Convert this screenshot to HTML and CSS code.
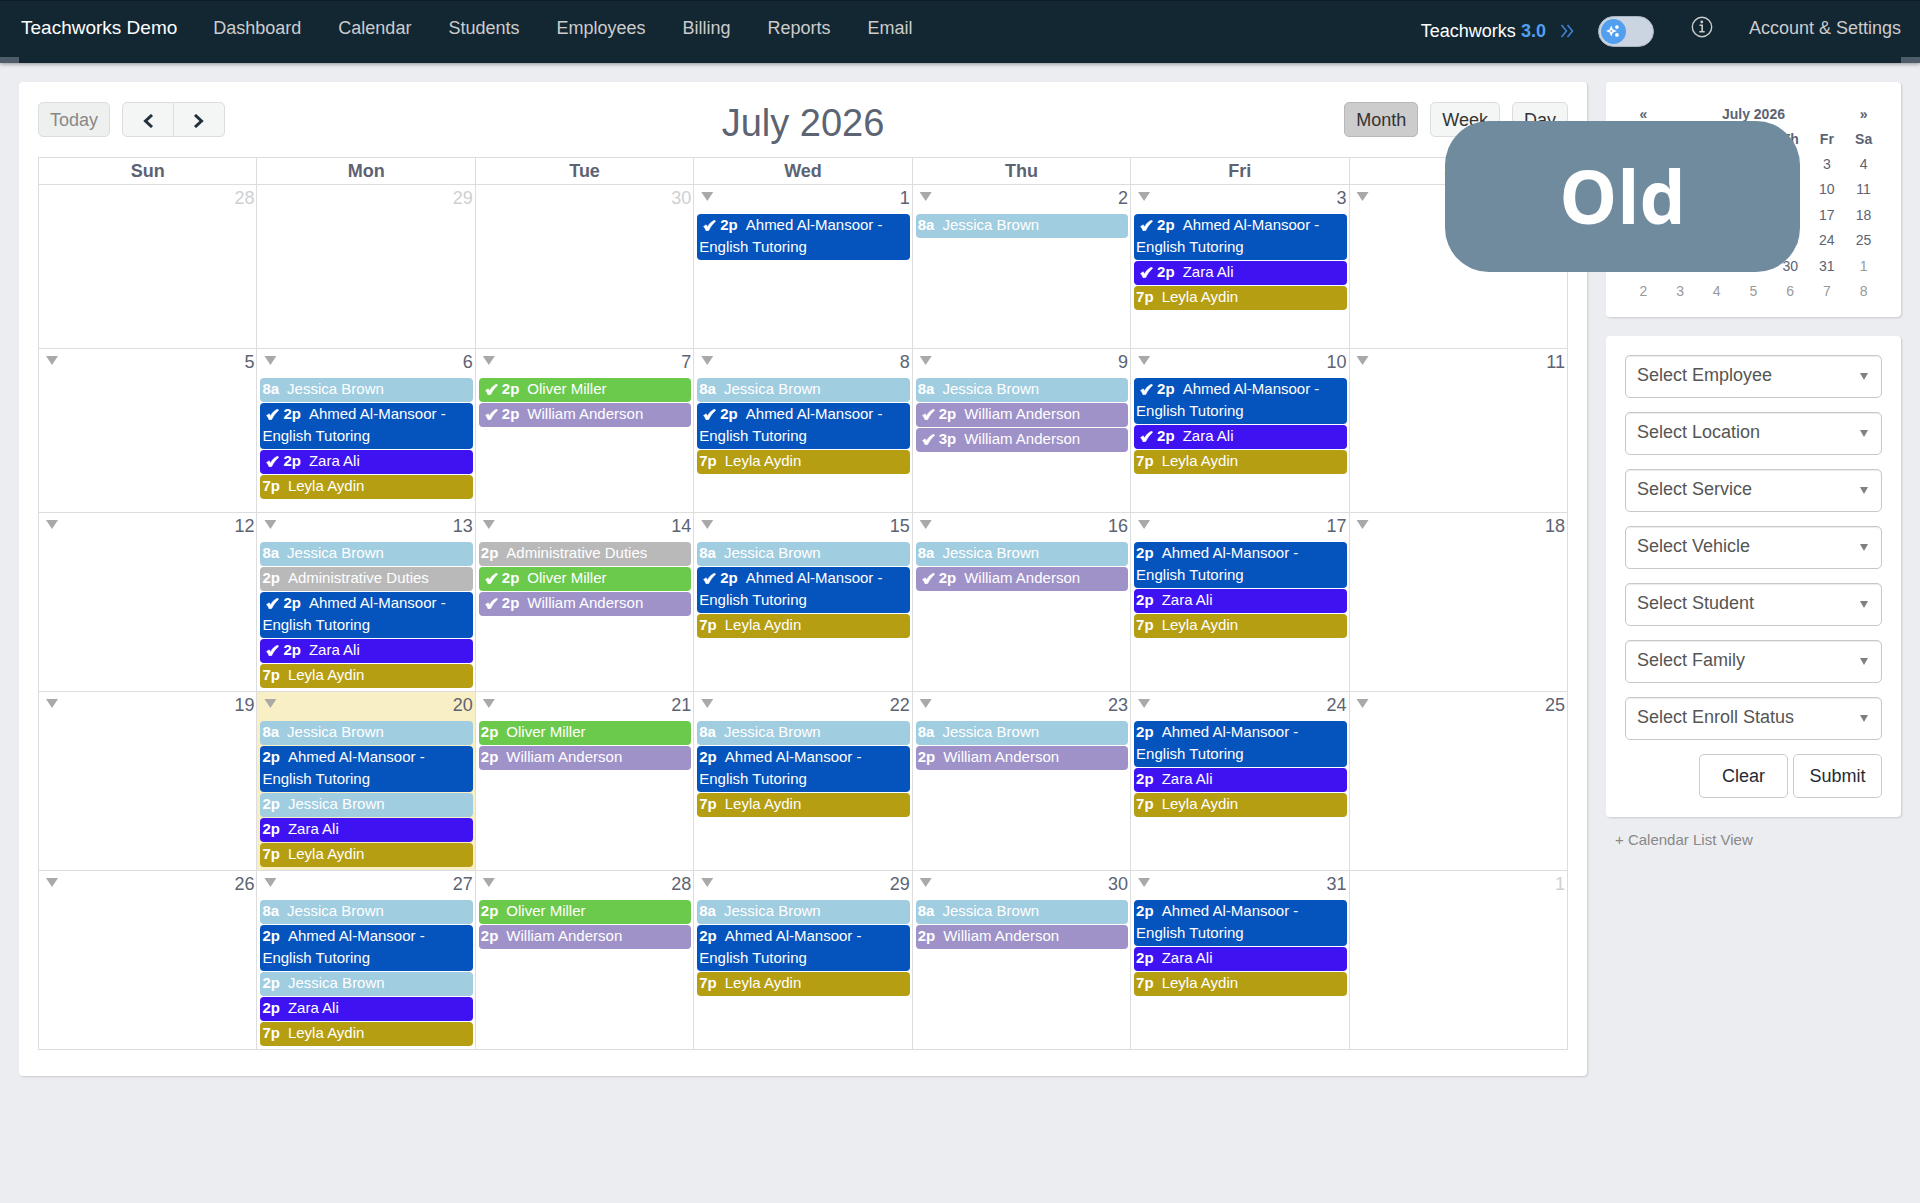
FILE: index.html
```html
<!DOCTYPE html>
<html lang="en">
<head>
  <meta charset="UTF-8">
  <meta name="viewport" content="width=device-width, initial-scale=1.0">
  <title>Calendar - Teachworks Demo</title>
  <link rel="stylesheet" href="styles.css">
</head>
<body>
<svg class="defs" aria-hidden="true">
  <symbol id="check" viewBox="0 0 14 12"><path d="M0.5 7 L3.4 5.2 C4 6 4.400 6.800 4.700 7.500 C6.600 4.200 9.200 1.500 12.800 0 L13.600 1.600 C10.400 4.200 8.200 7.400 6.200 11.400 L3.400 12 C2.600 10 1.700 8.400 0.500 7 Z" fill="currentColor" stroke="currentColor" stroke-width="0.500"/></symbol>
</svg>

<header class="topbar">
  <a class="brand" href="#">Teachworks Demo</a>
  <nav class="nav">
    <a href="#">Dashboard</a>
    <a href="#">Calendar</a>
    <a href="#">Students</a>
    <a href="#">Employees</a>
    <a href="#">Billing</a>
    <a href="#">Reports</a>
    <a href="#">Email</a>
  </nav>
  <div class="upgrade">
    <span class="upgrade-label">Teachworks <b>3.0</b></span>
    <svg class="chevrons" viewBox="0 0 14 14" fill="none" stroke="currentColor" stroke-width="1.5"><path d="M1.5 1l5 6-5 6M7.5 1l5 6-5 6"/></svg>
    <label class="switch">
      <input type="checkbox" aria-label="Switch to Teachworks 3.0">
      <span class="knob">
        <svg viewBox="0 0 16 16" fill="none" stroke="#fff" stroke-width="1.8"><path d="M6 4l1.200 2.800L10 8 7.200 9.200 6 12 4.800 9.200 2 8l2.800-1.200z"/><circle cx="12.500" cy="3.500" r="1.200" fill="#fff"/><circle cx="12.500" cy="12.500" r="1.200" fill="#fff"/></svg>
      </span>
    </label>
  </div>
  <a class="info" href="#" aria-label="Info">
    <svg viewBox="0 0 22 22" fill="none" stroke="currentColor"><circle cx="11" cy="11" r="9.700" stroke-width="1.400"/><circle cx="10.800" cy="6" r="1.400" fill="currentColor" stroke="none"/><path d="M8.500 9.300h2.700v6.500M8.300 15.800h5.400" stroke-width="1.600"/></svg>
  </a>
  <a class="account" href="#">Account &amp; Settings</a>
</header>

<main class="page">
  <section class="card calendar">
    <div class="toolbar">
      <div class="tools">
        <button class="btn" disabled>Today</button>
        <div class="group">
          <button class="btn arrow" aria-label="Previous"><svg viewBox="0 0 12 14" fill="none" stroke="currentColor" stroke-width="3"><path d="M10 1L3.500 7l6.500 6"/></svg></button>
          <button class="btn arrow" aria-label="Next"><svg viewBox="0 0 12 14" fill="none" stroke="currentColor" stroke-width="3"><path d="M2 1l6.500 6L2 13"/></svg></button>
        </div>
      </div>
      <h1>July 2026</h1>
      <div class="tools tools-right">
        <button class="btn active">Month</button>
        <button class="btn">Week</button>
        <button class="btn">Day</button>
      </div>
    </div>
    <table class="month">
      <thead>
        <tr><th>Sun</th><th>Mon</th><th>Tue</th><th>Wed</th><th>Thu</th><th>Fri</th><th>Sat</th></tr>
      </thead>
      <tbody id="days"></tbody>
    </table>
  </section>

  <aside class="side">
    <section class="card mini">
      <table>
        <thead>
          <tr><th><a href="#" aria-label="Previous month">«</a></th><th colspan="5">July 2026</th><th><a href="#" aria-label="Next month">»</a></th></tr>
          <tr><th>Su</th><th>Mo</th><th>Tu</th><th>We</th><th>Th</th><th>Fr</th><th>Sa</th></tr>
        </thead>
        <tbody id="miniDays"></tbody>
      </table>
    </section>

    <form class="card filters" onsubmit="return false">
      <div class="field"><select aria-label="Employee"><option>Select Employee</option></select></div>
      <div class="field"><select aria-label="Location"><option>Select Location</option></select></div>
      <div class="field"><select aria-label="Service"><option>Select Service</option></select></div>
      <div class="field"><select aria-label="Vehicle"><option>Select Vehicle</option></select></div>
      <div class="field"><select aria-label="Student"><option>Select Student</option></select></div>
      <div class="field"><select aria-label="Family"><option>Select Family</option></select></div>
      <div class="field"><select aria-label="Enroll Status"><option>Select Enroll Status</option></select></div>
      <div class="actions">
        <button type="reset">Clear</button>
        <button type="submit">Submit</button>
      </div>
    </form>
    <a class="list-link" href="#">+ Calendar List View</a>
  </aside>
</main>

<div class="version">Old</div>

<script src="script.js"></script>
</body>
</html>
```

FILE: styles.css
```css
* {
  box-sizing: border-box;
}
body {
  margin: 0;
  min-height: 100vh;
  background: #ecedf1;
  font-family: "Liberation Sans", Arial, sans-serif;
  font-size: 18px;
  color: #5c6373;
}
a {
  color: inherit;
  text-decoration: none;
}
button, select {
  font: inherit;
  cursor: pointer;
}
.defs {
  position: absolute;
  width: 0;
  height: 0;
}

/* top bar */
.topbar {
  position: relative;
  display: flex;
  align-items: flex-start;
  height: 63px;
  padding: 15px 19px 0 21px;
  background: #132733;
  border-top: 1px solid #0e1d27;
  box-shadow: 0 1px 4px rgba(0, 0, 0, 0.4);
  color: #ccc;
  line-height: 24px;
  white-space: nowrap;
}
.topbar::before,
.topbar::after {
  content: "";
  position: absolute;
  bottom: 0;
  width: 19px;
  height: 6px;
  background: #4f5d6b;
}
.topbar::before {
  left: 0;
}
.topbar::after {
  right: 0;
}
.brand {
  margin-right: 36px;
  font-size: 19px;
  color: #fff;
}
.nav {
  display: flex;
  gap: 37px;
}
.upgrade {
  display: flex;
  align-items: center;
  height: 30px;
  margin-left: auto;
  color: #fff;
}
.upgrade b {
  color: #529ff0;
}
.chevrons {
  width: 14px;
  height: 14px;
  margin: 0 24px 0 14px;
  color: #3f86d8;
}
.switch {
  display: flex;
  width: 56px;
  height: 31px;
  padding: 2px;
  border: 1px solid #aab4c0;
  border-radius: 16px;
  background: #cbd5e1;
}
.switch input {
  position: absolute;
  opacity: 0;
}
.knob {
  display: flex;
  align-items: center;
  justify-content: center;
  width: 25px;
  height: 25px;
  border-radius: 50%;
  background: #529ff0;
}
.knob svg {
  width: 14px;
  height: 14px;
}
.info {
  margin: 0 36px 0 37px;
}
.info svg {
  display: block;
  width: 22px;
  height: 22px;
}

/* layout */
.page {
  display: grid;
  grid-template-columns: minmax(0, 1fr) 295px;
  align-items: start;
  gap: 19px;
  padding: 19px;
}
.card {
  background: #fff;
  border-radius: 4px;
  box-shadow: 1px 1px 2px rgba(0, 0, 0, 0.15);
}

/* calendar */
.calendar {
  padding: 20px 19px 26px;
}
.toolbar {
  display: grid;
  grid-template-columns: 1fr auto 1fr;
  height: 55px;
}
.toolbar h1 {
  margin: 0;
  font-size: 38px;
  font-weight: 400;
  line-height: 42px;
}
.tools {
  display: flex;
  gap: 12px;
}
.tools-right {
  justify-content: flex-end;
}
.group {
  display: flex;
}
.btn {
  height: 35px;
  padding: 1px 11px 0;
  border: 1px solid #dcdede;
  border-radius: 5px;
  background: #f4f6f5;
  color: #333;
}
.btn:disabled {
  background: #eef0ef;
  color: #888;
}
.btn.active {
  border-color: #b8b8b8;
  background: #ccc;
}
.arrow {
  display: flex;
  align-items: center;
  justify-content: center;
  width: 52px;
  padding: 3px 0 0;
  color: #22303c;
}
.arrow svg {
  width: 12px;
  height: 14px;
}
.arrow:first-child {
  border-radius: 5px 0 0 5px;
}
.arrow:last-child {
  margin-left: -1px;
  border-radius: 0 5px 5px 0;
}
.month {
  width: 100%;
  border-collapse: collapse;
  table-layout: fixed;
}
.month th,
.month td {
  padding: 0;
  border: 1px solid #ddd;
}
.month th {
  height: 27px;
  line-height: 22px;
}
.month td {
  height: 164px;
  padding: 0 2px 2px 3px;
  vertical-align: top;
}
.month .today {
  background: #f9efc4;
}
.day-head {
  display: flex;
  justify-content: space-between;
  height: 29px;
  padding: 2px 0 0 4px;
  line-height: 22px;
}
.day-head span {
  margin-left: auto;
}
.other .day-head {
  color: #ced0d4;
}
.menu {
  width: 12px;
  height: 9px;
  margin-top: 5px;
  padding: 0;
  border: 0;
  background: #a9a9a9;
  clip-path: polygon(0 0, 100% 0, 50% 100%);
}
.event {
  display: block;
  margin-bottom: 1px;
  padding: 0 2px 2px;
  border-radius: 4px;
  font-size: 15px;
  line-height: 22px;
  color: #fff;
}
.event b {
  margin-right: 8px;
}
.event svg {
  width: 13px;
  height: 11px;
  margin: 0 4px;
  vertical-align: -1px;
}
.jessica { background: #a0cde0; }
.ahmed { background: #0553bd; }
.zara { background: #3f12f2; }
.leyla { background: #b59e11; }
.oliver { background: #6bca4b; }
.william { background: #9e92c9; }
.admin { background: #b9b9b9; }

/* sidebar */
.side {
  display: grid;
  gap: 19px;
}
.mini {
  padding: 19px 19px 13px;
}
.mini table {
  width: 100%;
  height: 203px;
  border-collapse: collapse;
  table-layout: fixed;
  font-size: 14px;
  text-align: center;
}
.mini th,
.mini td {
  height: 25px;
  padding: 0;
}
.mini .off {
  color: #999;
}
.filters {
  padding: 19px;
}
.field {
  position: relative;
  margin-bottom: 14px;
}
.field::after {
  content: "";
  position: absolute;
  top: 18px;
  right: 14px;
  width: 8px;
  height: 7px;
  background: #808080;
  clip-path: polygon(0 0, 100% 0, 50% 100%);
  pointer-events: none;
}
.field select {
  display: block;
  width: 100%;
  height: 43px;
  padding: 0 30px 3px 11px;
  border: 1px solid #c8c8c8;
  border-radius: 5px;
  background: #fff;
  box-shadow: inset 0 1px 1px rgba(0, 0, 0, 0.08);
  color: #555;
  appearance: none;
}
.actions {
  display: flex;
  justify-content: flex-end;
  gap: 5px;
}
.actions button {
  width: 89px;
  height: 44px;
  padding: 0;
  border: 1px solid #ccc;
  border-radius: 5px;
  background: #fff;
  color: #1f2a36;
}
.list-link {
  margin: -5px 0 0 9px;
  font-size: 15px;
  line-height: 18px;
  color: #888;
}

/* version badge over the page */
.version {
  position: absolute;
  top: 121px;
  right: 120px;
  width: 355px;
  height: 151px;
  border-radius: 44px;
  background: #718b9e;
  color: #fff;
  font: 700 73px/150px "Open Sans", sans-serif;
  text-align: center;
}
```

FILE: script.js
```js
const people = {
  jessica: 'Jessica Brown',
  ahmed: 'Ahmed Al-Mansoor - English Tutoring',
  zara: 'Zara Ali',
  leyla: 'Leyla Aydin',
  oliver: 'Oliver Miller',
  william: 'William Anderson',
  admin: 'Administrative Duties'
};

// "+" in front of the time means the lesson is completed
const events = {
  1: ['+2p ahmed'],
  2: ['8a jessica'],
  3: ['+2p ahmed', '+2p zara', '7p leyla'],
  6: ['8a jessica', '+2p ahmed', '+2p zara', '7p leyla'],
  7: ['+2p oliver', '+2p william'],
  8: ['8a jessica', '+2p ahmed', '7p leyla'],
  9: ['8a jessica', '+2p william', '+3p william'],
  10: ['+2p ahmed', '+2p zara', '7p leyla'],
  13: ['8a jessica', '2p admin', '+2p ahmed', '+2p zara', '7p leyla'],
  14: ['2p admin', '+2p oliver', '+2p william'],
  15: ['8a jessica', '+2p ahmed', '7p leyla'],
  16: ['8a jessica', '+2p william'],
  17: ['2p ahmed', '2p zara', '7p leyla'],
  20: ['8a jessica', '2p ahmed', '2p jessica', '2p zara', '7p leyla'],
  21: ['2p oliver', '2p william'],
  22: ['8a jessica', '2p ahmed', '7p leyla'],
  23: ['8a jessica', '2p william'],
  24: ['2p ahmed', '2p zara', '7p leyla'],
  27: ['8a jessica', '2p ahmed', '2p jessica', '2p zara', '7p leyla'],
  28: ['2p oliver', '2p william'],
  29: ['8a jessica', '2p ahmed', '7p leyla'],
  30: ['8a jessica', '2p william'],
  31: ['2p ahmed', '2p zara', '7p leyla']
};

const today = 20;

function eventHtml(item) {
  const [time, who] = item.split(' ');
  const done = time[0] === '+';
  const check = done ? '<svg><use href="#check"/></svg>' : '';
  return `<a class="event ${who}" href="#">${check}<b>${time.replace('+', '')}</b>${people[who]}</a>`;
}

function dayHtml(n) {
  const date = new Date(2026, 6, n).getDate();
  if (n < 1 || n > 31) {
    return `<td class="other"><div class="day-head"><span>${date}</span></div></td>`;
  }
  const list = (events[n] || []).map(eventHtml).join('');
  return `<td class="${n === today ? 'today' : ''}"><div class="day-head"><button class="menu" aria-label="Day menu"></button><span>${date}</span></div>${list}</td>`;
}

function miniHtml(n) {
  const date = new Date(2026, 6, n).getDate();
  return `<td class="${n < 1 || n > 31 ? 'off' : ''}">${date}</td>`;
}

// July 2026 starts on a Wednesday, so the first cell is day -2
function rows(count, cell) {
  let html = '';
  for (let w = 0; w < count; w++) {
    html += '<tr>';
    for (let d = 0; d < 7; d++) html += cell(w * 7 + d - 2);
    html += '</tr>';
  }
  return html;
}

document.getElementById('days').innerHTML = rows(5, dayHtml);
document.getElementById('miniDays').innerHTML = rows(6, miniHtml);
```
